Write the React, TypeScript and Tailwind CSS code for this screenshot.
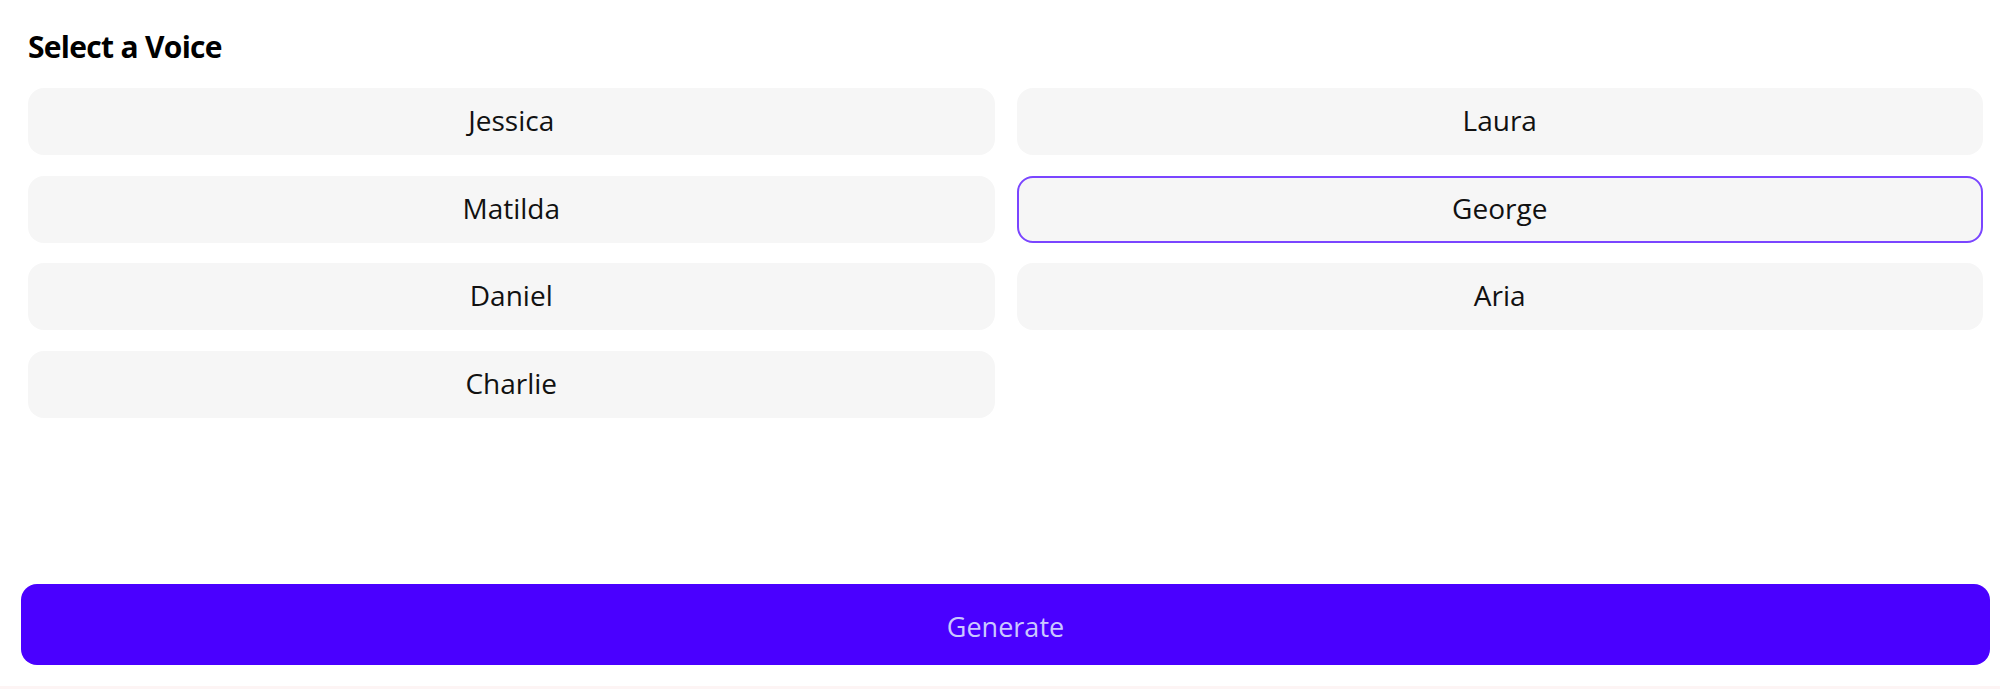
import { useState } from 'react';

const VOICES = ['Jessica', 'Laura', 'Matilda', 'George', 'Daniel', 'Aria', 'Charlie'];

export default function App() {
  const [selected, setSelected] = useState('George');

  return (
    <div
      className="flex h-[689px] flex-col bg-white text-[#111111]"
      style={{ fontFamily: '"Open Sans", "Noto Sans", sans-serif' }}
    >
      <div className="flex flex-1 flex-col pl-[28px] pr-[17px]">
        <h2 className="mt-[27px] text-[30px] font-bold leading-[40px] tracking-[-0.7px] text-black">
          Select a Voice
        </h2>

        <div className="mt-[21px] grid grid-cols-2 gap-x-[22px] gap-y-[20.7px]">
          {VOICES.map((name) => {
            const isSelected = name === selected;
            return (
              <button
                key={name}
                type="button"
                onClick={() => setSelected(name)}
                className={[
                  'flex h-[67px] items-center justify-center rounded-[16px] bg-[#f6f6f6] pb-[3px] text-[28px] leading-none',
                  isSelected ? 'border-2 border-[#7a45ff]' : 'border-2 border-transparent',
                ].join(' ')}
              >
                {name}
              </button>
            );
          })}
        </div>
      </div>

      {/* Primary action */}
      <div className="pb-[21px] pl-[21px] pr-[10px]">
        <button
          type="button"
          className="flex h-[81px] w-full items-center justify-center rounded-[16px] bg-[#4a00ff] pt-[4px] text-[27px] leading-none text-[#cbc8ff]"
        >
          Generate
        </button>
      </div>
      <div className="h-[3px] bg-[#fdf4f4]" />
    </div>
  );
}
